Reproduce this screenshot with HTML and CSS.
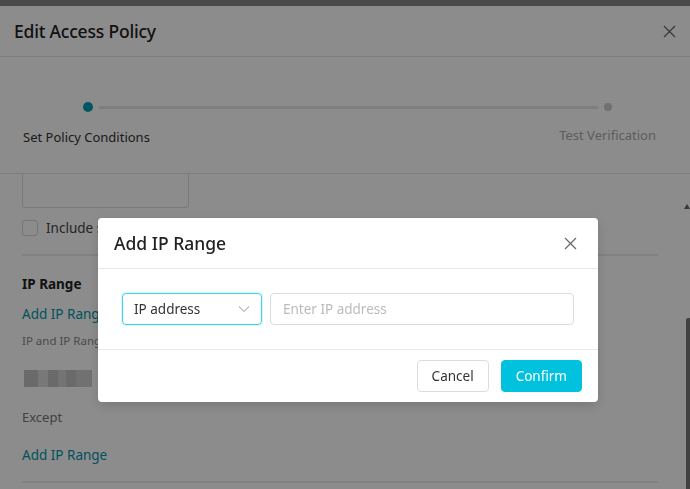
FILE: index.html
```html
<!DOCTYPE html>
<html lang="en">
<head>
    <meta charset="UTF-8">
    <meta name="viewport" content="width=device-width, initial-scale=1.0">
    <title>Edit Access Policy</title>
    <link rel="stylesheet" href="styles.css">
</head>
<body>
    <div class="topbar"></div>

    <div class="drawer">
        <div class="drawer-header">
            <h1>Edit Access Policy</h1>
            <svg class="close" width="13" height="13" viewBox="0 0 13 13"><path d="M1 1L12 12M12 1L1 12" stroke="#666" stroke-width="1.2" fill="none"/></svg>
        </div>

        <div class="steps">
            <div class="step-track">
                <span class="dot active"></span>
                <span class="line"></span>
                <span class="dot"></span>
            </div>
            <div class="step-labels">
                <span class="label active">Set Policy Conditions</span>
                <span class="label">Test Verification</span>
            </div>
        </div>

        <div class="drawer-body">
            <div class="inner">
                <div class="old-input"></div>
                <label class="check"><span class="box"></span>Include s</label>
                <hr>
                <h2>IP Range</h2>
                <a class="link">Add IP Range</a>
                <p class="hint">IP and IP Rang</p>
                <div class="blurred">
                    <span style="width:14px"></span><span style="width:10px;opacity:.6"></span><span style="width:10px"></span><span style="width:8px;opacity:.7"></span><span style="width:10px"></span><span style="width:16px;opacity:.8"></span>
                </div>
                <p class="except">Except</p>
                <a class="link">Add IP Range</a>
                <hr class="last">
            </div>
            <div class="scroll-arrow"></div>
            <div class="scroll-thumb"></div>
        </div>
    </div>

    <div class="mask">
        <div class="modal">
            <div class="modal-header">
                <h3>Add IP Range</h3>
                <svg class="close" width="13" height="13" viewBox="0 0 13 13"><path d="M1 1L12 12M12 1L1 12" stroke="#666" stroke-width="1.2" fill="none"/></svg>
            </div>
            <div class="modal-body">
                <div class="select">
                    <span>IP address</span>
                    <svg width="12" height="8" viewBox="0 0 12 8"><path d="M1 1.5L6 6.5L11 1.5" stroke="#bbb" stroke-width="1.1" fill="none"/></svg>
                </div>
                <div class="input">Enter IP address</div>
            </div>
            <div class="modal-footer">
                <button class="btn">Cancel</button>
                <button class="btn primary">Confirm</button>
            </div>
        </div>
    </div>
</body>
</html>
```

FILE: styles.css
```css
* {
    box-sizing: border-box;
}
body {
    margin: 0;
    width: 690px;
    height: 489px;
    overflow: hidden;
    font-family: "Noto Sans", "Open Sans", sans-serif;
    color: #333;
    background-color: #fff;
}
.topbar {
    height: 6px;
    background-color: #888;
}
.drawer {
    height: 483px;
    display: flex;
    flex-direction: column;
    background-color: #fff;
}
.drawer-header {
    height: 51px;
    padding: 0 14px;
    display: flex;
    align-items: center;
    justify-content: space-between;
    border-bottom: 1px solid #e3e3e3;
}
.drawer-header h1 {
    margin: 0;
    font-size: 17.5px;
    font-weight: 500;
    color: #222;
    letter-spacing: -0.2px;
}
.steps {
    height: 117px;
    padding-top: 45px;
    border-bottom: 1px solid #e3e3e3;
}
.step-track {
    display: flex;
    align-items: center;
    padding: 0 78px 0 83px;
}
.dot {
    width: 8px;
    height: 8px;
    border-radius: 50%;
    background-color: #ccc;
}
.dot.active {
    width: 10px;
    height: 10px;
    background-color: #00a0b8;
}
.line {
    flex: 1;
    height: 3px;
    margin: 0 6px;
    background-color: #e6e6e6;
}
.step-labels {
    display: flex;
    justify-content: space-between;
    padding: 0 34px 0 23px;
    margin-top: 14px;
}
.label {
    font-size: 13px;
    color: #aaa;
}
.label.active {
    color: #333;
    margin-top: 2px;
}
.drawer-body {
    flex: 1;
    position: relative;
    overflow: hidden;
}
.inner {
    padding: 0 32px 0 22px;
}
.old-input {
    width: 167px;
    height: 34px;
    border: 1px solid #ddd;
    border-top: none;
    border-radius: 0 0 4px 4px;
}
.check {
    display: flex;
    align-items: center;
    margin-top: 11px;
    font-size: 13.5px;
    color: #444;
}
.check .box {
    width: 16px;
    height: 16px;
    border: 1px solid #d5d5d5;
    border-radius: 3px;
    margin-right: 8px;
}
hr {
    border: none;
    border-top: 2px solid #ebebeb;
    margin: 17px 0 0;
}
h2 {
    margin: 18px 0 0;
    font-size: 13.5px;
    font-weight: 700;
    color: #222;
    line-height: 20px;
}
.link {
    display: block;
    margin-top: 10px;
    font-size: 13.5px;
    color: #0095ad;
    line-height: 20px;
}
.hint {
    margin: 9px 0 0;
    font-size: 11.5px;
    color: #888;
    line-height: 16px;
    white-space: nowrap;
}
.blurred {
    display: flex;
    margin-top: 21px;
    margin-left: 2px;
    height: 17px;
}
.blurred span {
    background-color: #c2c2c2;
}
.except {
    margin: 21px 0 0;
    font-size: 13px;
    color: #777;
    line-height: 18px;
}
.except + .link {
    margin-top: 19px;
}
hr.last {
    margin-top: 16px;
}
.scroll-arrow {
    position: absolute;
    right: 0;
    top: 30px;
    width: 0;
    height: 0;
    border-left: 3px solid transparent;
    border-right: 3px solid transparent;
    border-bottom: 5px solid #666;
}
.scroll-thumb {
    position: absolute;
    right: 0;
    top: 144px;
    bottom: 0;
    width: 4px;
    border-radius: 2px 0 0 0;
    background-color: #777;
}
.mask {
    position: fixed;
    inset: 0;
    background-color: rgba(0, 0, 0, 0.45);
}
.modal {
    position: absolute;
    left: 98px;
    top: 218px;
    width: 500px;
    background-color: #fff;
    border-radius: 4px;
    box-shadow: 0 4px 12px rgba(0, 0, 0, 0.15);
}
.modal-header {
    height: 51px;
    padding: 0 21px 0 16px;
    display: flex;
    align-items: center;
    justify-content: space-between;
    border-bottom: 1px solid #e8e8e8;
}
.modal-header h3 {
    margin: 0;
    font-size: 17.5px;
    font-weight: 500;
    color: #222;
}
.modal-body {
    display: flex;
    gap: 8px;
    padding: 24px;
    border-bottom: 1px solid #e8e8e8;
}
.select {
    width: 140px;
    height: 32px;
    display: flex;
    align-items: center;
    justify-content: space-between;
    padding: 0 11px;
    border: 1px solid #3dd3ea;
    border-radius: 4px;
    box-shadow: 0 0 0 1px rgba(0, 193, 222, 0.15);
    font-size: 13.5px;
    color: #333;
}
.input {
    flex: 1;
    height: 32px;
    display: flex;
    align-items: center;
    padding: 0 12px;
    border: 1px solid #dcdcdc;
    border-radius: 4px;
    font-size: 13.5px;
    color: #bbb;
}
.modal-footer {
    display: flex;
    justify-content: flex-end;
    gap: 12px;
    padding: 10px 16px;
}
.btn {
    height: 32px;
    padding: 0 14px;
    font-family: inherit;
    font-size: 13.5px;
    color: #333;
    background-color: #fff;
    border: 1px solid #dcdcdc;
    border-radius: 4px;
}
.btn.primary {
    min-width: 81px;
    color: #fff;
    background-color: #00c1de;
    border-color: #00c1de;
}
```
